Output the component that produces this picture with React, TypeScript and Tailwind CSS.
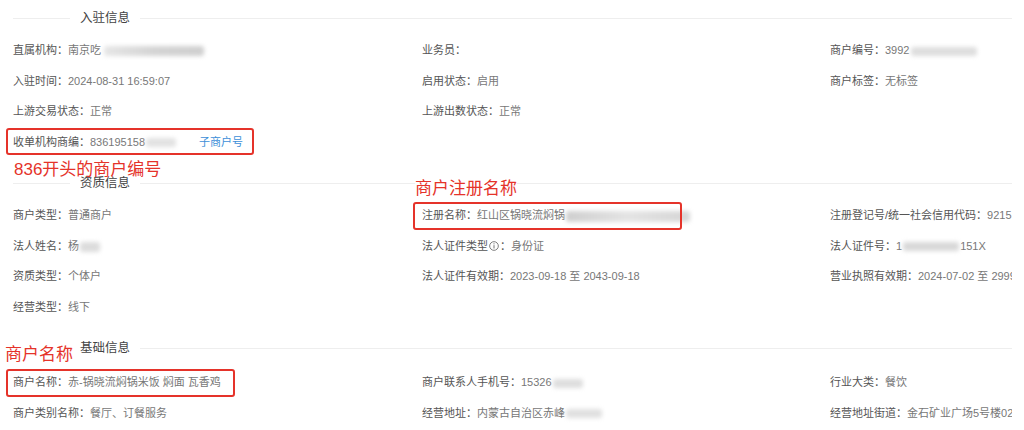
import React from "react";

const FONT = "font-['Liberation_Sans','Noto_Sans_CJK_SC',sans-serif]";

function Blur({ className }: { className: string }) {
  return <span className={"inline-block align-middle rounded-[3px] blur-[2px] " + className} />;
}

function Field({ label, children, extra }: { label: React.ReactNode; children?: React.ReactNode; extra?: React.ReactNode }) {
  return (
    <div className="relative flex h-[30.5px] items-center whitespace-nowrap text-[11px]">
      <span className="text-[#555]">{label}：</span>
      <span className="text-[#777]">{children}</span>
      {extra}
    </div>
  );
}

function Empty() {
  return <div className="h-[30.5px]" />;
}

function Title({ text }: { text: string }) {
  return (
    <div className="flex h-[20px] items-center pl-[13px]">
      <div className="h-px w-[57px] bg-[#eeeeee]" />
      <span className="px-[10px] text-[12.5px] text-[#444]">{text}</span>
      <div className="h-px flex-1 bg-[#eeeeee]" />
    </div>
  );
}

function InfoIcon() {
  return (
    <svg viewBox="0 0 12 12" className="mx-[1px] inline-block h-[10px] w-[10px] align-[-1px]">
      <circle cx="6" cy="6" r="5.2" fill="none" stroke="#666" strokeWidth="1" />
      <line x1="6" y1="5" x2="6" y2="9" stroke="#666" strokeWidth="1.1" />
      <circle cx="6" cy="3.4" r="0.7" fill="#666" />
    </svg>
  );
}

const grid = "grid grid-cols-[409px_408px_409px] pl-[13px]";

export default function App() {
  return (
    <div className={"h-[430px] w-[1024px] overflow-hidden bg-white " + FONT}>
      <div className="w-[1012px] overflow-hidden pt-[8px]">
        {/* 入驻信息 */}
        <Title text="入驻信息" />
        <div className={grid + " mt-[7px] mb-[16px]"}>
          <Field label="直属机构">
            南京吃<Blur className="ml-[3px] h-[10px] w-[100px] bg-gradient-to-r from-[#e6e6e6] via-[#d4d4d4] to-[#cfcfcf]" />
          </Field>
          <Field label="业务员" />
          <Field label="商户编号">
            3992<Blur className="ml-[2px] h-[9px] w-[66px] bg-[#dedede]" />
          </Field>

          <Field label="入驻时间">2024-08-31 16:59:07</Field>
          <Field label="启用状态">启用</Field>
          <Field label="商户标签">无标签</Field>

          <Field label="上游交易状态">正常</Field>
          <Field label="上游出数状态">正常</Field>
          <Empty />

          <Field
            label="收单机构商编"
            extra={
              <>
                <span className="ml-[23px] text-[#3d8fd8]">子商户号</span>
                <div className="pointer-events-none absolute left-[-7px] top-[1.5px] h-[27px] w-[248px] rounded-[3px] border-2 border-[#e5332a]" />
                <div className="absolute left-[1px] top-[34px] whitespace-nowrap text-[17px] leading-none text-[#e5332a]">
                  836开头的商户编号
                </div>
              </>
            }
          >
            836195158<Blur className="ml-[1px] h-[9px] w-[30px] bg-[#e2e2e2]" />
          </Field>
          <Empty />
          <Empty />
        </div>

        {/* 资质信息 */}
        <Title text="资质信息" />
        <div className={grid + " mt-[7px] mb-[16px]"}>
          <Field label="商户类型">普通商户</Field>
          <Field
            label="注册名称"
            extra={
              <>
                <div className="pointer-events-none absolute left-[-9px] top-[1.5px] h-[28px] w-[269px] rounded-[3px] border-2 border-[#e5332a]" />
                <div className="absolute left-[-7px] top-[-20px] whitespace-nowrap bg-white text-[17px] leading-none text-[#e5332a]">
                  商户注册名称
                </div>
              </>
            }
          >
            红山区锅晓流焖锅<Blur className="ml-[1px] h-[11px] w-[124px] bg-gradient-to-r from-[#cfcfcf] via-[#e4e4e4] to-[#d6d6d6]" />
          </Field>
          <Field label="注册登记号/统一社会信用代码">9215</Field>

          <Field label="法人姓名">
            杨<Blur className="ml-[1px] h-[10px] w-[20px] bg-[#dcdcdc]" />
          </Field>
          <Field label={<>法人证件类型<InfoIcon /></>}>身份证</Field>
          <Field label="法人证件号">
            1<Blur className="mx-[1px] h-[9px] w-[56px] bg-[#d8d8d8]" />151X
          </Field>

          <Field label="资质类型">个体户</Field>
          <Field label="法人证件有效期">2023-09-18 至 2043-09-18</Field>
          <Field label="营业执照有效期">2024-07-02 至 2999</Field>

          <Field label="经营类型">线下</Field>
          <Empty />
          <Empty />
        </div>

        {/* 基础信息 */}
        <Title text="基础信息" />
        <div className={grid + " mt-[9px]"}>
          <Field
            label="商户名称"
            extra={
              <>
                <div className="pointer-events-none absolute left-[-7px] top-[1.5px] h-[28px] w-[229px] rounded-[3px] border-2 border-[#e5332a]" />
                <div className="absolute left-[-8px] top-[-21px] whitespace-nowrap bg-white pr-[4px] text-[17px] leading-none text-[#e5332a]">
                  商户名称
                </div>
              </>
            }
          >
            赤-锅晓流焖锅米饭 焖面 瓦香鸡
          </Field>
          <Field label="商户联系人手机号">
            15326<Blur className="ml-[1px] h-[9px] w-[30px] bg-[#dedede]" />
          </Field>
          <Field label="行业大类">餐饮</Field>

          <Field label="商户类别名称">餐厅、订餐服务</Field>
          <Field label="经营地址">
            内蒙古自治区赤峰<Blur className="ml-[1px] h-[9px] w-[36px] bg-[#e0e0e0]" />
          </Field>
          <Field label="经营地址街道">金石矿业广场5号楼02</Field>
        </div>
      </div>
    </div>
  );
}
